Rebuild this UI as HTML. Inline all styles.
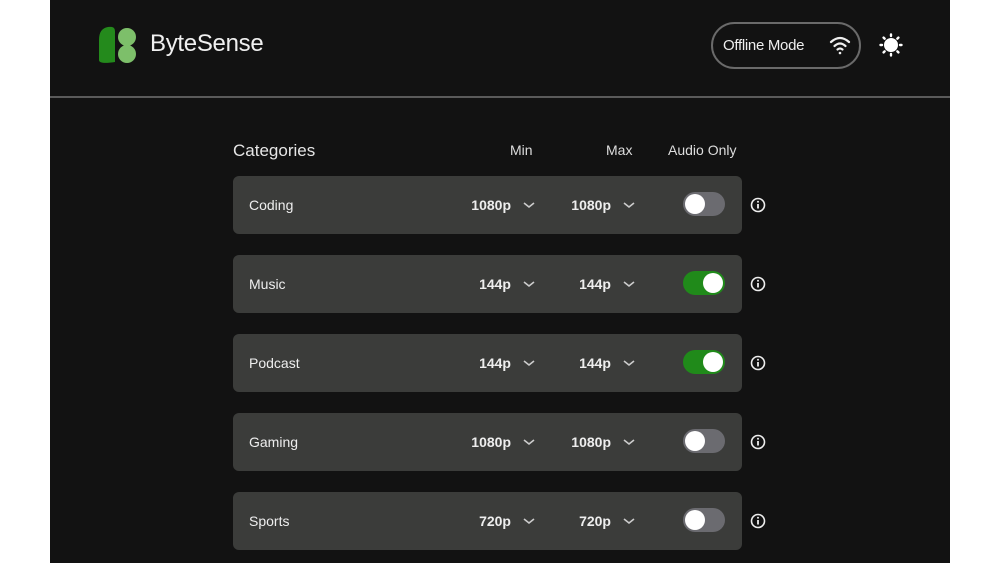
<!DOCTYPE html>
<html><head><style>
body{margin:0;width:1000px;height:563px;background:#fff;overflow:hidden;font-family:"Liberation Sans",sans-serif}
.app{position:absolute;left:50px;top:0;width:900px;height:563px;background:#121212;color:#eee}
.hline{position:absolute;left:0;top:96px;width:900px;height:2px;background:#5a5a5a}
.brand{position:absolute;left:100px;top:30px;font-size:24px;color:#f0f0f0;letter-spacing:-0.3px}
.pill{position:absolute;left:661px;top:22px;width:146px;height:43px;border:2px solid #6a6a6a;border-radius:24px}
.pill span{position:absolute;left:10px;top:13px;font-size:15px;color:#eee;letter-spacing:-0.3px}
.hdr{position:absolute;top:142px;font-size:14px;color:#ddd}
.row{position:absolute;left:183px;width:509px;height:58px;background:#3b3c3a;border-radius:6px}
.row .n{position:absolute;left:16px;top:21px;font-size:14px;color:#eee}
.row .v{position:absolute;display:block;top:21px;font-size:14px;font-weight:bold;color:#eee;text-align:right;width:60px}
.row svg.c{position:absolute;top:24px}
.tg{position:absolute;left:450px;top:16px;width:42px;height:24px;border-radius:12px;background:#6b6b70}
.tg i{position:absolute;top:2px;left:2px;width:20px;height:20px;border-radius:50%;background:#fff}
.tg.on{background:#208a1a}.tg.on i{left:20px}
.info{position:absolute;left:700px;width:16px;height:16px}
</style></head><body><div class="app">
<svg style="position:absolute;left:48px;top:26px" width="40" height="40"><path d="M10 1 C18 0 17 4 17 10 L17 36 C10 37 1 38 1 34 L1 14 C1 6 4 2 10 1Z" fill="#248a1c"/><circle cx="29" cy="11" r="9" fill="#7dbf6a"/><circle cx="29" cy="28" r="9" fill="#7dbf6a"/></svg>
<div class="brand">ByteSense</div>
<div class="pill"><span>Offline Mode</span>
<svg style="position:absolute;left:116px;top:11px" width="22" height="20" viewBox="0 0 22 20" fill="none" stroke="#eee" stroke-width="2.2" stroke-linecap="round"><path d="M2 7 Q11 -1 20 7"/><path d="M5.5 11 Q11 6 16.5 11"/><path d="M8.5 14.5 Q11 12.5 13.5 14.5"/><circle cx="11" cy="18" r="1.3" fill="#eee" stroke="none"/></svg></div>
<svg style="position:absolute;left:829px;top:33px" width="24" height="24" viewBox="0 0 24 24"><circle cx="12" cy="12" r="7" fill="#fff"/><g stroke="#fff" stroke-width="2.4" stroke-linecap="round"><path d="M12 1.5v1.5M12 21v1.5M1.5 12h1.5M21 12h1.5M4.6 4.6l1 1M18.4 18.4l1 1M4.6 19.4l1-1M18.4 5.6l1-1"/></g></svg>
<div class="hline"></div>
<div class="hdr" style="left:183px;top:141px;font-size:17px;color:#e6e6e6">Categories</div>
<div class="hdr" style="left:460px">Min</div>
<div class="hdr" style="left:556px">Max</div>
<div class="hdr" style="left:618px">Audio Only</div>

<div class="row" style="top:176px"><span class="n">Coding</span><span class="v" style="left:218px">1080p</span><svg class="c" style="left:290px" width="12" height="10"><path d="M1 3l5 4 5-4" stroke="#ccc" stroke-width="1.6" fill="none"/></svg><span class="v" style="left:318px">1080p</span><svg class="c" style="left:390px" width="12" height="10"><path d="M1 3l5 4 5-4" stroke="#ccc" stroke-width="1.6" fill="none"/></svg><div class="tg"><i></i></div></div>
<div class="row" style="top:255px"><span class="n">Music</span><span class="v" style="left:218px">144p</span><svg class="c" style="left:290px" width="12" height="10"><path d="M1 3l5 4 5-4" stroke="#ccc" stroke-width="1.6" fill="none"/></svg><span class="v" style="left:318px">144p</span><svg class="c" style="left:390px" width="12" height="10"><path d="M1 3l5 4 5-4" stroke="#ccc" stroke-width="1.6" fill="none"/></svg><div class="tg on"><i></i></div></div>
<div class="row" style="top:334px"><span class="n">Podcast</span><span class="v" style="left:218px">144p</span><svg class="c" style="left:290px" width="12" height="10"><path d="M1 3l5 4 5-4" stroke="#ccc" stroke-width="1.6" fill="none"/></svg><span class="v" style="left:318px">144p</span><svg class="c" style="left:390px" width="12" height="10"><path d="M1 3l5 4 5-4" stroke="#ccc" stroke-width="1.6" fill="none"/></svg><div class="tg on"><i></i></div></div>
<div class="row" style="top:413px"><span class="n">Gaming</span><span class="v" style="left:218px">1080p</span><svg class="c" style="left:290px" width="12" height="10"><path d="M1 3l5 4 5-4" stroke="#ccc" stroke-width="1.6" fill="none"/></svg><span class="v" style="left:318px">1080p</span><svg class="c" style="left:390px" width="12" height="10"><path d="M1 3l5 4 5-4" stroke="#ccc" stroke-width="1.6" fill="none"/></svg><div class="tg"><i></i></div></div>
<div class="row" style="top:492px"><span class="n">Sports</span><span class="v" style="left:218px">720p</span><svg class="c" style="left:290px" width="12" height="10"><path d="M1 3l5 4 5-4" stroke="#ccc" stroke-width="1.6" fill="none"/></svg><span class="v" style="left:318px">720p</span><svg class="c" style="left:390px" width="12" height="10"><path d="M1 3l5 4 5-4" stroke="#ccc" stroke-width="1.6" fill="none"/></svg><div class="tg"><i></i></div></div>

<svg class="info" style="top:197px" viewBox="0 0 16 16"><circle cx="8" cy="8" r="6.5" fill="none" stroke="#eee" stroke-width="1.6"/><path d="M8 7v4.5" stroke="#eee" stroke-width="1.8"/><circle cx="8" cy="4.8" r="1" fill="#eee"/></svg>
<svg class="info" style="top:276px" viewBox="0 0 16 16"><circle cx="8" cy="8" r="6.5" fill="none" stroke="#eee" stroke-width="1.6"/><path d="M8 7v4.5" stroke="#eee" stroke-width="1.8"/><circle cx="8" cy="4.8" r="1" fill="#eee"/></svg>
<svg class="info" style="top:355px" viewBox="0 0 16 16"><circle cx="8" cy="8" r="6.5" fill="none" stroke="#eee" stroke-width="1.6"/><path d="M8 7v4.5" stroke="#eee" stroke-width="1.8"/><circle cx="8" cy="4.8" r="1" fill="#eee"/></svg>
<svg class="info" style="top:434px" viewBox="0 0 16 16"><circle cx="8" cy="8" r="6.5" fill="none" stroke="#eee" stroke-width="1.6"/><path d="M8 7v4.5" stroke="#eee" stroke-width="1.8"/><circle cx="8" cy="4.8" r="1" fill="#eee"/></svg>
<svg class="info" style="top:513px" viewBox="0 0 16 16"><circle cx="8" cy="8" r="6.5" fill="none" stroke="#eee" stroke-width="1.6"/><path d="M8 7v4.5" stroke="#eee" stroke-width="1.8"/><circle cx="8" cy="4.8" r="1" fill="#eee"/></svg>
</div></body></html>
